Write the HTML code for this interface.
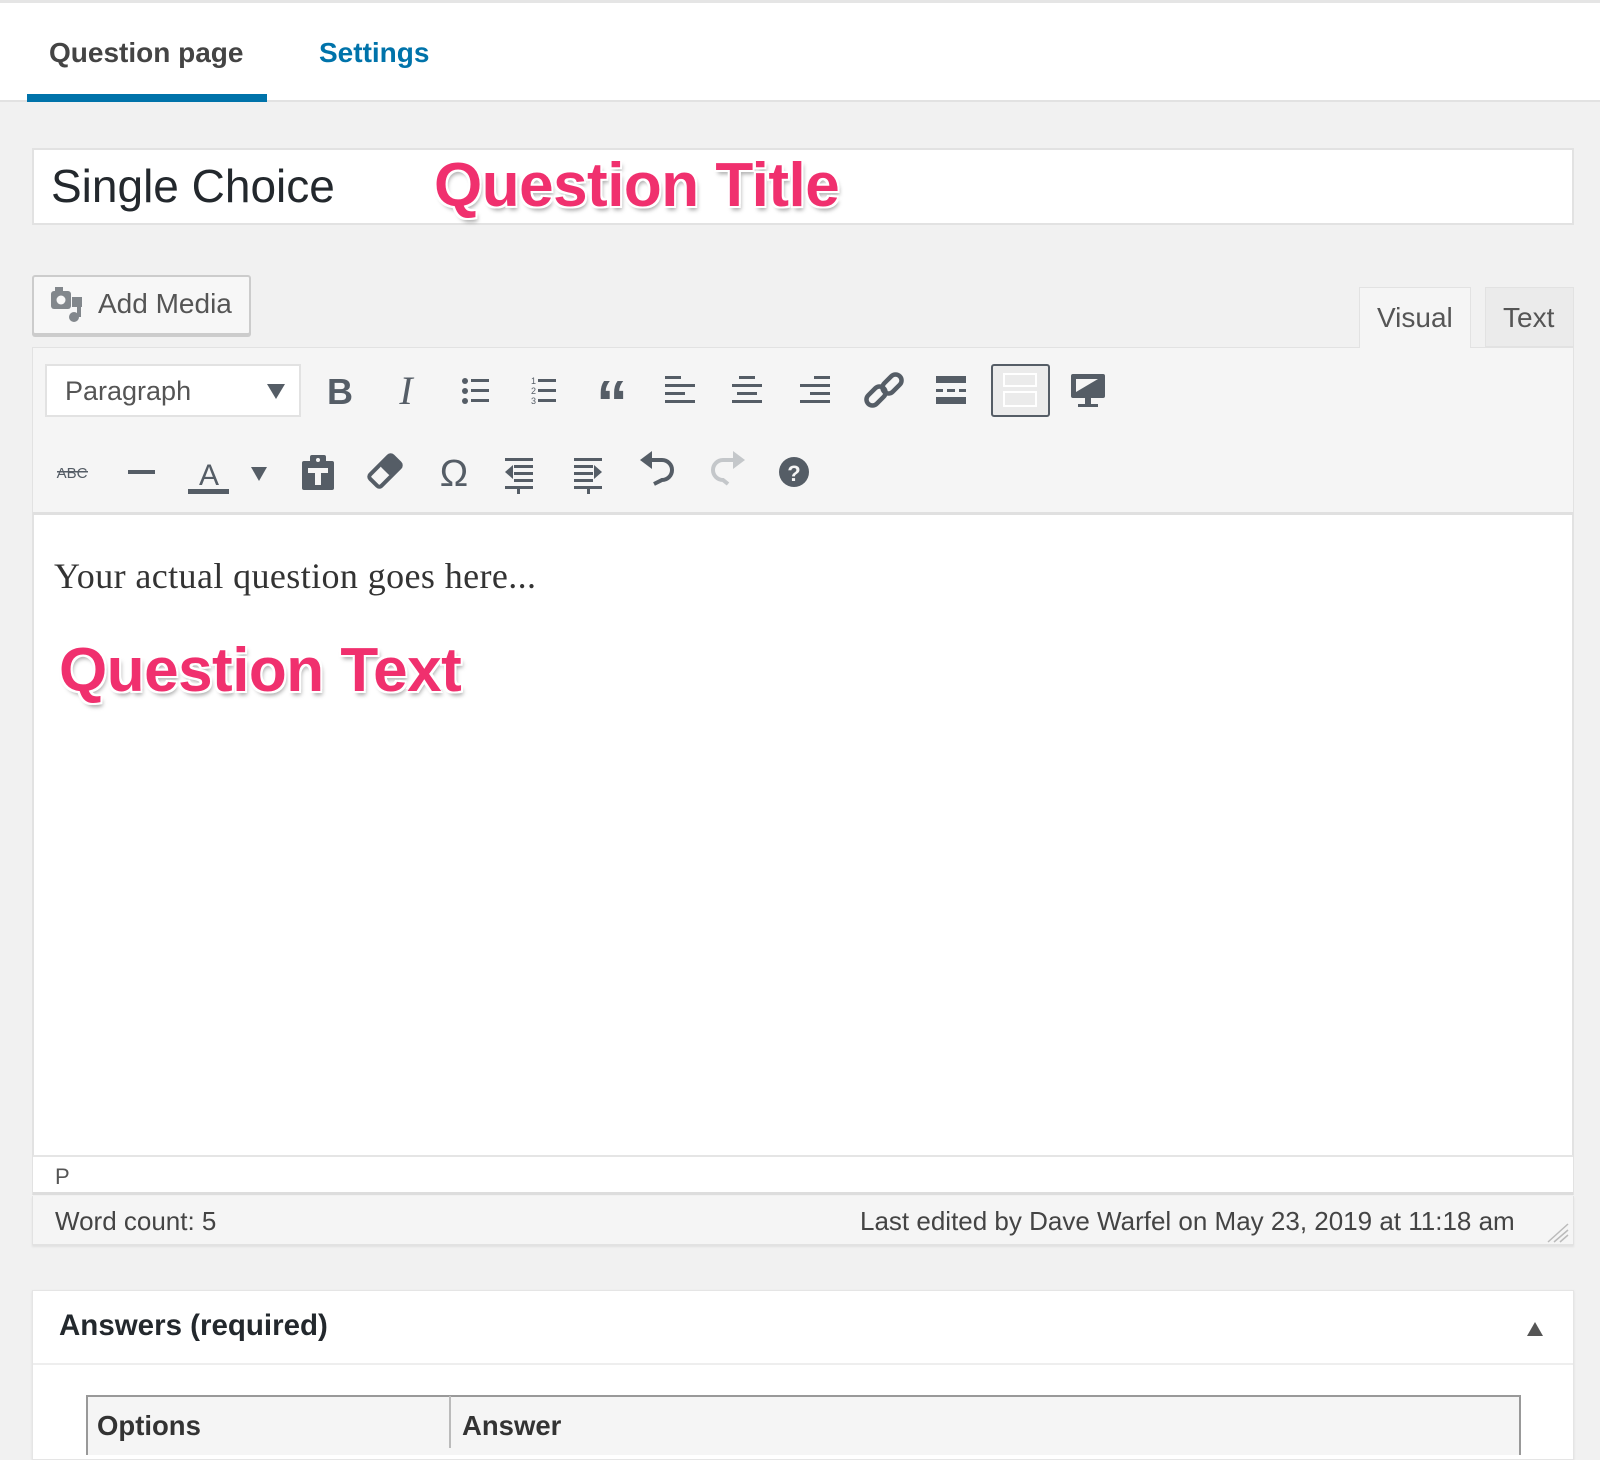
<!DOCTYPE html>
<html><head><meta charset="utf-8"><style>
*{margin:0;padding:0;box-sizing:border-box}
body{width:1600px;height:1447px;background:#f1f1f1;font-family:"Liberation Sans",sans-serif;position:relative;overflow:hidden;color:#32373c}
.a{position:absolute}
.pink{color:#f0306e;font-weight:bold;letter-spacing:-0.5px;text-shadow:0 0 3px #fff,2px 2px 0 #fff,-2px -2px 0 #fff,2px -2px 0 #fff,-2px 2px 0 #fff,2px 4px 4px rgba(0,0,0,.35)}
</style></head><body>
<div class="a" style="left:0;top:0;width:1600px;height:102px;background:#fff;border-top:3px solid #e5e5e5;border-bottom:2px solid #e2e2e2"></div>
<div class="a" style="left:49px;top:37px;font-size:28px;font-weight:bold;color:#444">Question page</div>
<div class="a" style="left:319px;top:37px;font-size:28px;font-weight:bold;color:#0073aa">Settings</div>
<div class="a" style="left:27px;top:94px;width:240px;height:8px;background:#0073aa"></div>

<div class="a" style="left:32px;top:148px;width:1542px;height:77px;background:#fff;border:2px solid #e2e2e2"></div>
<div class="a" style="left:51px;top:159px;font-size:46px;color:#23282d">Single Choice</div>
<div class="a pink" style="left:434px;top:150px;font-size:62px">Question Title</div>

<div class="a" style="left:32px;top:275px;width:219px;height:60px;background:#f7f7f7;border:2px solid #ccc;border-radius:3px;box-shadow:0 2px 0 #ccc"></div>
<svg class="a" style="left:50px;top:287px" width="36" height="36" viewBox="0 0 36 36" fill="#82878c"><rect x="1" y="4" width="20" height="18" rx="3"/><circle cx="11" cy="13" r="4.5" fill="#f7f7f7"/><rect x="22" y="10" width="10" height="10"/><rect x="27" y="14" width="4" height="16"/><circle cx="24" cy="30" r="5"/><rect x="5" y="0" width="8" height="4"/></svg>
<div class="a" style="left:98px;top:288px;font-size:28px;color:#555">Add Media</div>

<div class="a" style="left:1359px;top:287px;width:112px;height:62px;background:#f5f5f5;border:1px solid #e2e2e2;border-bottom:none"></div>
<div class="a" style="left:1377px;top:302px;font-size:28px;color:#555">Visual</div>
<div class="a" style="left:1485px;top:287px;width:89px;height:60px;background:#ebebeb;border:1px solid #e2e2e2"></div>
<div class="a" style="left:1503px;top:302px;font-size:28px;color:#555">Text</div>

<div class="a" style="left:32px;top:347px;width:1542px;height:848px;background:#fff;border:2px solid #e2e2e2"></div>
<div class="a" style="left:33px;top:348px;width:1540px;height:167px;background:#f5f5f5;border-bottom:3px solid #e0e0e0"></div>
<div class="a" style="left:1360px;top:347px;width:110px;height:3px;background:#f5f5f5"></div>
<div class="a" style="left:45px;top:364px;width:256px;height:53px;background:#fff;border:2px solid #e2e2e2"></div>
<div class="a" style="left:65px;top:376px;font-size:27px;color:#555">Paragraph</div>
<div class="a" style="left:267px;top:384px;width:0;height:0;border-left:9px solid transparent;border-right:9px solid transparent;border-top:15px solid #555d66"></div>
<div class="a" style="left:991px;top:364px;width:59px;height:53px;background:#ebebeb;border:2px solid #555d66;border-radius:3px"></div>

<svg class="a" style="left:0;top:0" width="1600" height="520" viewBox="0 0 1600 520" fill="#555d66" stroke="none">
<text x="340" y="404" font-family="Liberation Sans" font-weight="bold" font-size="36" text-anchor="middle">B</text>
<text x="406" y="404" font-family="Liberation Serif" font-style="italic" font-size="40" text-anchor="middle">I</text>
<g><circle cx="465" cy="381" r="3"/><circle cx="465" cy="391" r="3"/><circle cx="465" cy="401" r="3"/><rect x="471" y="379" width="18" height="3"/><rect x="471" y="389" width="18" height="3"/><rect x="471" y="399" width="18" height="3"/></g>
<g font-family="Liberation Sans" font-size="9"><text x="531" y="384">1</text><text x="531" y="394">2</text><text x="531" y="404">3</text><rect x="538" y="379" width="18" height="3"/><rect x="538" y="389" width="18" height="3"/><rect x="538" y="399" width="18" height="3"/></g>
<text x="612" y="425" font-family="Liberation Sans" font-weight="bold" font-size="64" text-anchor="middle">“</text>
<g><rect x="665" y="376" width="16" height="3"/><rect x="665" y="384" width="30" height="3"/><rect x="665" y="392" width="20" height="3"/><rect x="665" y="400" width="30" height="3"/></g>
<g><rect x="739" y="376" width="16" height="3"/><rect x="732" y="384" width="30" height="3"/><rect x="737" y="392" width="20" height="3"/><rect x="732" y="400" width="30" height="3"/></g>
<g><rect x="814" y="376" width="16" height="3"/><rect x="800" y="384" width="30" height="3"/><rect x="810" y="392" width="20" height="3"/><rect x="800" y="400" width="30" height="3"/></g>
<g fill="none" stroke="#555d66" stroke-width="4.5"><rect x="870" y="385" width="12" height="22" rx="6" transform="rotate(45 876 396)"/><rect x="886" y="373" width="12" height="22" rx="6" transform="rotate(45 892 384)"/></g>
<g><rect x="936" y="376" width="30" height="7"/><rect x="936" y="389" width="7" height="3"/><rect x="947" y="389" width="8" height="3"/><rect x="959" y="389" width="7" height="3"/><rect x="936" y="397" width="30" height="7"/></g>
<g fill="#fff"><rect x="1004" y="374" width="32" height="12" fill="none" stroke="#fff" stroke-width="2"/><rect x="1004" y="392" width="32" height="14" fill="none" stroke="#fff" stroke-width="2"/></g>
<g><rect x="1071" y="374" width="34" height="24" rx="2"/><polygon points="1076,379 1098,379 1076,392" fill="#f5f5f5"/><rect x="1085" y="398" width="6" height="6"/><rect x="1078" y="404" width="20" height="3"/></g>
<text x="72" y="478" font-family="Liberation Sans" font-size="15" text-anchor="middle">ABC</text><rect x="57" y="471" width="31" height="1.5"/>
<rect x="128" y="470" width="27" height="4"/>
<text x="209" y="485" font-family="Liberation Sans" font-size="30" text-anchor="middle">A</text><rect x="188" y="489" width="41" height="5"/>
<polygon points="251,467 267,467 259,481"/>
<g><rect x="302" y="461" width="32" height="29" rx="2"/><rect x="310" y="455" width="16" height="10" rx="2"/><circle cx="318" cy="460" r="2" fill="#f5f5f5"/><rect x="308" y="468" width="20" height="5" fill="#f5f5f5"/><rect x="315" y="468" width="6" height="17" fill="#f5f5f5"/></g>
<g transform="rotate(45 385 471)"><rect x="377" y="455" width="16" height="32" rx="3" fill="none" stroke="#555d66" stroke-width="4"/><rect x="377" y="455" width="16" height="16" rx="3"/></g>
<text x="454" y="486" font-family="Liberation Sans" font-size="38" text-anchor="middle">Ω</text>
<g><rect x="505" y="458" width="28" height="3"/><rect x="514" y="465" width="19" height="3"/><rect x="514" y="472" width="19" height="3"/><rect x="514" y="479" width="19" height="3"/><rect x="505" y="486" width="28" height="3"/><polygon points="505,472 513,465 513,479"/><rect x="517" y="489" width="3" height="5"/></g>
<g><rect x="574" y="458" width="28" height="3"/><rect x="574" y="465" width="19" height="3"/><rect x="574" y="472" width="19" height="3"/><rect x="574" y="479" width="19" height="3"/><rect x="574" y="486" width="28" height="3"/><polygon points="602,472 594,465 594,479"/><rect x="587" y="489" width="3" height="5"/></g>
<path d="M650 460 L662 460 A10 10 0 0 1 662 480 L654 484" fill="none" stroke="#555d66" stroke-width="4"/><polygon points="640,460 652,451 652,469"/>
<path d="M735 460 L723 460 A10 10 0 0 0 723 480 L728 484" fill="none" stroke="#c4c7ca" stroke-width="4"/><polygon points="745,460 733,451 733,469" fill="#c4c7ca"/>
<circle cx="794" cy="472" r="15"/><text x="794" y="481" font-family="Liberation Sans" font-weight="bold" font-size="22" fill="#f5f5f5" text-anchor="middle">?</text>
</svg>

<div class="a" style="left:54px;top:555px;font-family:'Liberation Serif',serif;font-size:36px;letter-spacing:0.4px;color:#333">Your actual question goes here...</div>
<div class="a pink" style="left:59px;top:635px;font-size:62px">Question Text</div>

<div class="a" style="left:33px;top:1155px;width:1540px;height:40px;background:#fff;border-top:2px solid #e5e5e5;border-bottom:3px solid #ddd"></div>
<div class="a" style="left:55px;top:1164px;font-size:22px;color:#555">P</div>
<div class="a" style="left:32px;top:1196px;width:1542px;height:49px;background:#f5f5f5;border:1px solid #e2e2e2;border-top:none;box-shadow:0 2px 2px #e0e0e0"></div>
<div class="a" style="left:55px;top:1206px;font-size:26px;color:#444">Word count: 5</div>
<div class="a" style="left:860px;top:1206px;font-size:26px;color:#444">Last edited by Dave Warfel on May 23, 2019 at 11:18 am</div>
<svg class="a" style="left:1546px;top:1222px" width="24" height="22" stroke="#bbb" stroke-width="1.5"><line x1="2" y1="20" x2="22" y2="2"/><line x1="8" y1="20" x2="22" y2="8"/><line x1="14" y1="20" x2="22" y2="13"/></svg>

<div class="a" style="left:32px;top:1290px;width:1542px;height:170px;background:#fff;border:1px solid #e5e5e5;box-shadow:0 1px 2px #ddd"></div>
<div class="a" style="left:33px;top:1363px;width:1540px;height:2px;background:#eee"></div>
<div class="a" style="left:59px;top:1309px;font-size:29.5px;font-weight:bold;color:#23282d">Answers (required)</div>
<div class="a" style="left:1527px;top:1322px;width:0;height:0;border-left:8px solid transparent;border-right:8px solid transparent;border-bottom:14px solid #555"></div>
<div class="a" style="left:86px;top:1395px;width:1435px;height:60px;background:#f5f5f5;border:2px solid #999;border-bottom:none"></div>
<div class="a" style="left:449px;top:1396px;width:2px;height:52px;background:#bbb"></div>
<div class="a" style="left:97px;top:1410px;font-size:27.5px;font-weight:bold;color:#333">Options</div>
<div class="a" style="left:462px;top:1410px;font-size:27.5px;font-weight:bold;color:#333">Answer</div>
</body></html>
